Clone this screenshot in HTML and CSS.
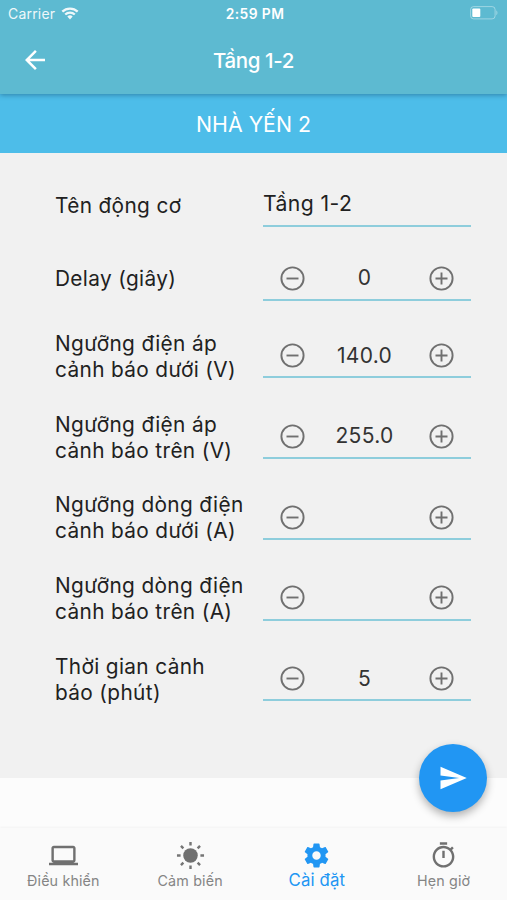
FILE: index.html
```html
<!DOCTYPE html>
<html lang="vi">
<head>
  <meta charset="UTF-8"/>
  <meta name="viewport" content="width=device-width, initial-scale=1"/>
  <title>Cài đặt</title>
  <link rel="stylesheet" href="styles.css">
</head>
<body>
  <svg class="defs" width="0" height="0">
    <symbol id="minus" viewBox="0 0 29 29"><circle cx="14.500" cy="14.500" r="11.100"/><path d="M8.500 14.500h12"/></symbol>
    <symbol id="plus" viewBox="0 0 29 29"><circle cx="14.500" cy="14.500" r="11.100"/><path d="M8.500 14.500h12M14.500 8.500v12"/></symbol>
  </svg>
  <div class="app">
    <header class="header">
      <div class="status">
        <div class="carrier">Carrier
          <svg width="18" height="13" viewBox="0 0 18 13"><path d="M9 12.500 6.300 9.500a4 4 0 0 1 5.400 0z" fill="#fff"/><path d="M4.200 7.500a7 7 0 0 1 9.600 0M1.300 4.600a11.200 11.200 0 0 1 15.400 0" fill="none" stroke="#fff" stroke-width="2.300"/></svg>
        </div>
        <div class="clock">2:59 PM</div>
        <svg class="battery" width="28" height="14" viewBox="0 0 28 14"><rect x=".6" y=".6" width="24.500" height="12.300" rx="3" fill="none" stroke="#fff" stroke-opacity=".4"/><path d="M26.300 4.500c1.500.6 1.500 3.900 0 4.500z" fill="#fff" fill-opacity=".4"/><rect x="2.300" y="2.500" width="8" height="8.500" rx="1" fill="#fff"/></svg>
      </div>
      <div class="titlebar">
        <svg class="back" width="30" height="30" viewBox="0 0 24 24"><path d="M20 11H7.830l5.590-5.590L12 4l-8 8 8 8 1.410-1.410L7.830 13H20v-2z"/></svg>
        <h1>Tầng 1-2</h1>
      </div>
    </header>
    <div class="house">NHÀ YẾN 2</div>
    <main class="form">
      <div class="row"><label>Tên động cơ</label><div class="field name">Tầng 1-2</div></div>
      <div class="row"><label>Delay (giây)</label><div class="field"><svg><use href="#minus"/></svg><span>0</span><svg><use href="#plus"/></svg></div></div>
      <div class="row"><label>Ngưỡng điện áp<br>cảnh báo dưới (V)</label><div class="field"><svg><use href="#minus"/></svg><span>140.0</span><svg><use href="#plus"/></svg></div></div>
      <div class="row"><label>Ngưỡng điện áp<br>cảnh báo trên (V)</label><div class="field"><svg><use href="#minus"/></svg><span>255.0</span><svg><use href="#plus"/></svg></div></div>
      <div class="row"><label>Ngưỡng dòng điện<br>cảnh báo dưới (A)</label><div class="field"><svg><use href="#minus"/></svg><span></span><svg><use href="#plus"/></svg></div></div>
      <div class="row"><label>Ngưỡng dòng điện<br>cảnh báo trên (A)</label><div class="field"><svg><use href="#minus"/></svg><span></span><svg><use href="#plus"/></svg></div></div>
      <div class="row"><label>Thời gian cảnh<br>báo (phút)</label><div class="field"><svg><use href="#minus"/></svg><span>5</span><svg><use href="#plus"/></svg></div></div>
    </main>
    <button class="send"><svg width="30" height="30" viewBox="0 0 24 24"><path d="M2.010 21L23 12 2.010 3 2 10l15 2-15 2z"/></svg></button>
    <nav class="tabs">
      <div class="tab">
        <svg viewBox="0 0 24 24"><path d="M20 18c1.100 0 1.990-.9 1.990-2L22 6c0-1.100-.9-2-2-2H4c-1.100 0-2 .9-2 2v10c0 1.100.9 2 2 2H0v2h24v-2h-4zM4 6h16v10H4V6z"/></svg>
        <span>Điều khiển</span>
      </div>
      <div class="tab">
        <svg viewBox="0 0 24 24"><circle cx="12" cy="12" r="6"/><path d="M12 .8v3M12 20.200v3M.8 12h3M20.200 12h3M4.100 4.100l2 2M17.900 17.900l2 2M4.100 19.900l2-2M17.900 6.100l2-2" stroke="#757575" stroke-width="2"/></svg>
        <span>Cảm biến</span>
      </div>
      <div class="tab active">
        <svg viewBox="0 0 24 24"><path d="M19.430 12.980c.04-.32.07-.64.07-.98s-.03-.66-.07-.98l2.110-1.650c.19-.15.24-.42.12-.64l-2-3.460c-.12-.22-.39-.3-.61-.22l-2.490 1c-.52-.4-1.080-.73-1.690-.98l-.38-2.650C14.460 2.180 14.250 2 14 2h-4c-.25 0-.46.18-.49.42l-.38 2.650c-.61.25-1.170.59-1.690.98l-2.490-1c-.23-.09-.49 0-.61.22l-2 3.460c-.13.22-.07.49.12.64l2.110 1.650c-.04.32-.07.65-.07.98s.03.66.07.98l-2.110 1.650c-.19.15-.24.42-.12.64l2 3.460c.12.22.39.3.61.22l2.490-1c.52.4 1.080.73 1.690.98l.38 2.650c.03.24.24.42.49.42h4c.25 0 .46-.18.49-.42l.38-2.650c.61-.25 1.170-.59 1.690-.98l2.490 1c.23.09.49 0 .61-.22l2-3.460c.12-.22.07-.49-.12-.64l-2.110-1.650zM12 15.500c-1.930 0-3.500-1.570-3.500-3.500s1.570-3.500 3.500-3.500 3.500 1.570 3.500 3.500-1.570 3.500-3.500 3.500z"/></svg>
        <span>Cài đặt</span>
      </div>
      <div class="tab">
        <svg viewBox="0 0 24 24"><path d="M15 1H9v2h6V1zm-4 13h2V8h-2v6zm8.030-6.610l1.420-1.420c-.43-.51-.9-.99-1.410-1.410l-1.420 1.420C16.070 4.740 14.120 4 12 4c-4.970 0-9 4.030-9 9s4.020 9 9 9 9-4.030 9-9c0-2.120-.74-4.070-1.970-5.610zM12 20c-3.870 0-7-3.130-7-7s3.130-7 7-7 7 3.130 7 7-3.130 7-7 7z"/></svg>
        <span>Hẹn giờ</span>
      </div>
    </nav>
  </div>
</body>
</html>
```
FILE: styles.css
```css
:root { --bar:#5dbad1; --house:#4dbde9; --form:#f1f1f1; --bg:#fcfcfc; --line:#8ecddc; --icon:#707070; --blue:#2196f3; }
*{box-sizing:border-box;margin:0;padding:0;}
body{font-family:Inter,"Noto Sans",sans-serif;background:var(--bg);color:#212121;}
.defs{display:block;}
.app{width:507px;height:900px;display:flex;flex-direction:column;position:relative;overflow:hidden;}
.header{height:94px;background:var(--bar);color:#fff;box-shadow:0 1px 5px rgba(0,40,70,.4);z-index:1;}
.status{height:27px;padding:0 9px 0 8px;display:grid;grid-template-columns:1fr auto 1fr;align-items:center;}
.carrier{display:flex;align-items:center;gap:6px;font-size:14px;letter-spacing:.2px;opacity:.9;}
.clock{font-size:13.8px;font-weight:600;letter-spacing:.45px;padding-left:4px;}
.battery{justify-self:end;margin-bottom:2px;}
.titlebar{height:66px;padding:0 20px;display:grid;grid-template-columns:30px 1fr 30px;align-items:center;}
.back{fill:#fff;}
h1{text-align:center;font-size:20.5px;font-weight:500;letter-spacing:-.4px;}
.house{height:59px;background:var(--house);color:#fff;display:flex;align-items:center;justify-content:center;font-size:21.3px;}
.form{height:625px;background:var(--form);padding:29.2px 36px 0 55px;display:flex;flex-direction:column;gap:28.8px;}
.row{display:grid;grid-template-columns:208px 208px;align-items:center;}
.row label{font-size:20.8px;line-height:26px;letter-spacing:.36px;white-space:nowrap;margin:1px 0 -1px;}
.field{height:45px;border-bottom:2px solid var(--line);padding:1.5px 15px 0;display:grid;grid-template-columns:29px 1fr 29px;align-items:center;}
.field svg{width:29px;height:29px;fill:none;stroke:var(--icon);stroke-width:1.9;}
.field span{text-align:center;font-size:21px;letter-spacing:.3px;padding:0 5px 1px 0;color:#333;}
.field.name{display:block;padding:0;font-size:21.2px;letter-spacing:.4px;line-height:43px;}
.send{position:absolute;left:419px;top:744px;width:68px;height:68px;border:none;border-radius:50%;background:var(--blue);display:flex;align-items:center;justify-content:center;box-shadow:0 4px 9px rgba(0,0,0,.3);z-index:2;}
.send svg{fill:#fff;}
.tabs{height:72px;margin-top:auto;background:#fafafa;box-shadow:0 -1px 2px rgba(0,0,0,.04);display:grid;grid-template-columns:repeat(4,1fr);}
.tab{padding-top:13px;display:flex;flex-direction:column;align-items:center;color:#858585;font-size:14.3px;}
.tab svg{width:29px;height:29px;fill:var(--icon);}
.tab span{line-height:20px;margin-top:1px;letter-spacing:.15px;}
.tab.active{color:var(--blue);font-size:16.8px;}
.tab.active svg{fill:var(--blue);}
.tab.active span{margin-top:0;}
```
